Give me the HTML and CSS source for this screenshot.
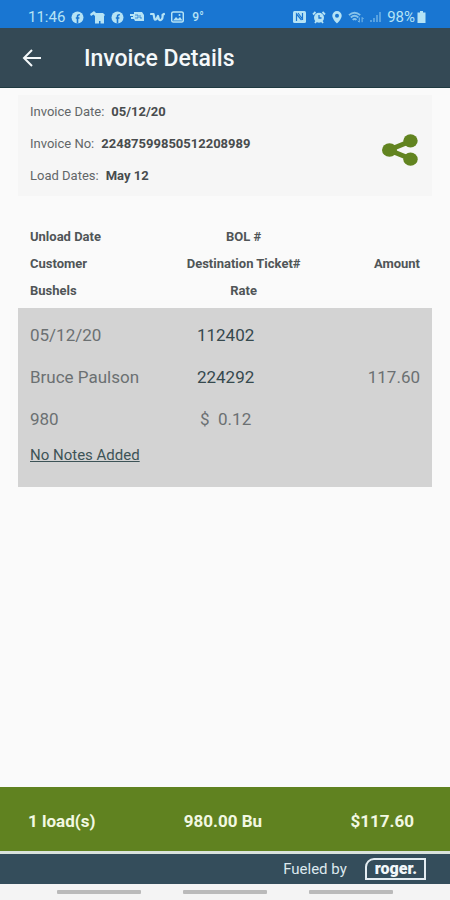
FILE: index.html
```html
<!DOCTYPE html>
<html lang="en">
<head>
<meta charset="UTF-8"/>
<meta name="viewport" content="width=device-width,initial-scale=1.0"/>
<title>Invoice Details</title>
<link rel="stylesheet" href="styles.css">
</head>
<body>

<!-- status bar -->
<div class="status">
  <div class="status-group">
    <span class="clock">11:46</span>
    <svg width="13" height="13" viewBox="0 0 13 13"><circle cx="6.5" cy="6.5" r="6" fill="currentColor"/><path d="M6.5 12.5V5.5q0-2 2.3-1.8M4.8 7h3.6" fill="none" stroke="#1976d2" stroke-width="1.6"/></svg>
    <svg width="15" height="13" viewBox="0 0 15 13"><path d="M0 3 4 0l2 2h7l2 2-1 1v7.500h-3.500V10H9v2.500H5V5L3.500 3.500 1 5z" fill="currentColor"/></svg>
    <svg width="13" height="13" viewBox="0 0 13 13"><circle cx="6.5" cy="6.5" r="6" fill="currentColor"/><path d="M6.5 12.5V5.5q0-2 2.3-1.8M4.8 7h3.6" fill="none" stroke="#1976d2" stroke-width="1.6"/></svg>
    <svg width="14" height="12" viewBox="0 0 14 12"><path d="M4 1h8l2 3v6H5l-1-2H1V6h2V5H0V3h4z" fill="currentColor"/><path d="M5 4h3v3H5M10 4v3h2" fill="none" stroke="#1976d2" stroke-width=".8"/></svg>
    <svg width="15" height="12" viewBox="0 0 15 12"><path d="M1 3h2.5l1 5q.5 1.500 2 0L8 5l1 3.500q1 1.500 2.500 0 1.500-1.500 1-4.500L14 3" fill="none" stroke="currentColor" stroke-width="2.200" stroke-linecap="round" stroke-linejoin="round"/></svg>
    <svg width="13" height="12" viewBox="0 0 13 12"><rect x=".7" y="1" width="11.600" height="10" rx="1.500" fill="none" stroke="currentColor" stroke-width="1.500"/><path d="M2 9.500 5 6l2 2 2-2 2.500 3.500z" fill="currentColor"/><circle cx="8.500" cy="4" r="1" fill="currentColor"/></svg>
    <span class="temp">9&deg;</span>
  </div>
  <div class="status-group">
    <svg width="13" height="12" viewBox="0 0 13 12"><rect width="13" height="12" rx="1.500" fill="currentColor"/><path d="M3.500 10V3l5 6M9.500 2v7M5 2l4.500 6" fill="none" stroke="#1976d2" stroke-width="1.200"/></svg>
    <svg width="14" height="13" viewBox="0 0 14 13"><path d="M1 3.500 3.500 1M13 3.500 10.500 1M3 12l1.500-2M11 12 9.500 10" stroke="currentColor" stroke-width="1.800"/><circle cx="7" cy="6.800" r="5" fill="currentColor"/><path d="M7 4v3h2.500" fill="none" stroke="#1976d2" stroke-width="1.300"/></svg>
    <svg width="10" height="13" viewBox="0 0 10 13"><path d="M5 0a4.700 4.700 0 0 1 4.700 4.700C9.700 8 5 12.500 5 12.500S.3 8 .3 4.700A4.700 4.700 0 0 1 5 0z" fill="currentColor"/><circle cx="5" cy="4.700" r="2" fill="#1976d2"/></svg>
    <svg class="dim" width="16" height="13" viewBox="0 0 17 13"><path d="M1 4q6-5 12 0M3 6.500q4-3.500 8 0M5 9q2-2 4 0" fill="none" stroke="currentColor" stroke-width="2"/><path d="M12 6.500v5M10.500 10l1.500 1.500M15 11.500v-5M16.500 8 15 6.500" fill="none" stroke="currentColor"/></svg>
    <svg class="faint" width="11" height="12" viewBox="0 0 11 12"><path d="M0 11h2V9H0zM3 11h2V7H3zM6 11h2V4H6zM9 11h2V1H9z" fill="currentColor"/></svg>
    <span class="battery">98%<svg width="9" height="12" viewBox="0 0 9 12"><path d="M3 0h3v1.500h2.500V12H.5V1.500H3z" fill="currentColor"/></svg></span>
  </div>
</div>

<header class="app-bar">
  <button class="back" aria-label="Back">
    <svg width="20" height="18" viewBox="0 0 20 18"><path d="M19 9H2M10 1 2 9l8 8" fill="none" stroke="currentColor" stroke-width="2"/></svg>
  </button>
  <h1>Invoice Details</h1>
</header>

<main>
  <section class="summary">
    <dl>
      <div><dt>Invoice Date:</dt><dd>05/12/20</dd></div>
      <div><dt>Invoice No:</dt><dd>22487599850512208989</dd></div>
      <div><dt>Load Dates:</dt><dd>May 12</dd></div>
    </dl>
    <button class="share" aria-label="Share">
      <svg width="36" height="32" viewBox="0 0 36 32"><path d="M29 7 7 16l22 9" fill="none" stroke="currentColor" stroke-width="5"/><ellipse cx="7.500" cy="16" rx="7.500" ry="6.800" fill="currentColor"/><ellipse cx="28.500" cy="6.800" rx="7.200" ry="6.600" fill="currentColor"/><ellipse cx="28.500" cy="25.200" rx="7.200" ry="6.600" fill="currentColor"/></svg>
    </button>
  </section>

  <table class="loads">
    <thead>
      <tr><th>Unload Date</th><th>BOL #</th><th></th></tr>
      <tr><th>Customer</th><th>Destination Ticket#</th><th>Amount</th></tr>
      <tr><th>Bushels</th><th>Rate</th><th></th></tr>
    </thead>
    <tbody>
      <tr><td>05/12/20</td><td class="strong">112402</td><td></td></tr>
      <tr><td>Bruce Paulson</td><td class="strong">224292</td><td>117.60</td></tr>
      <tr><td>980</td><td>$&nbsp; 0.12</td><td></td></tr>
      <tr class="notes"><td colspan="3"><a href="#">No Notes Added</a></td></tr>
    </tbody>
  </table>
</main>

<!-- totals -->
<div class="totals">
  <span>1 load(s)</span>
  <span>980.00 Bu</span>
  <span>$117.60</span>
</div>

<footer class="brand">
  <span>Fueled by</span>
  <span class="logo">roger.</span>
</footer>

<div class="nav-bar"><i></i><i></i><i></i></div>

</body>
</html>
```
FILE: styles.css
```css
*{margin:0;padding:0;box-sizing:border-box}
body{
  min-height:100vh;display:flex;flex-direction:column;
  background:#fafafa;color:#4c5254;font-family:Roboto,"Liberation Sans",sans-serif
}
button{border:none;background:none;color:inherit;cursor:pointer}
svg{display:block}

/* ---------- status bar ---------- */
.status{
  height:28px;padding:6px 24px 0 28px;display:flex;justify-content:space-between;
  align-items:center;background:#1976d2;color:#b5e3f5;font-size:15px
}
.status-group{display:flex;align-items:center;gap:6px}
.temp{font-size:12px;font-weight:500;margin-left:2px}
.dim{opacity:.7}
.faint{opacity:.4}
.battery{display:flex;align-items:center;gap:2px}

/* ---------- app bar ---------- */
.app-bar{
  height:60px;padding:0 22px;display:flex;align-items:center;gap:42px;
  background:#344955;color:#f4f8fa;border-bottom:1px solid #1f3a41
}
.app-bar h1{font-size:23px;font-weight:500;line-height:28px;padding-top:2px}

/* ---------- summary ---------- */
main{flex:1;padding:7px 18px 0}
.summary{
  display:flex;justify-content:space-between;align-items:center;
  padding:0 14px 5px 12px;background:#f6f6f6
}
.summary dl div{display:flex;align-items:center;gap:7px;height:32px;font-size:13px}
.summary dt{color:#626668}
.summary dd{font-weight:700;color:#484c4e}
.share{color:#628420;padding-top:13px}

/* ---------- loads table ---------- */
.loads{width:100%;margin-top:27px;border-spacing:0;table-layout:fixed}
.loads th{height:27px;font-size:13px;font-weight:700;color:#505557}
.loads th:first-child,.loads td:first-child{width:35%;padding-left:12px;text-align:left}
.loads th:nth-child(2),.loads td:nth-child(2){width:39%;text-align:center}
.loads th:last-child{padding-right:12px;text-align:right}
.loads thead tr:last-child th{height:31px;padding-bottom:4px}
.loads tbody{background:#d3d3d3;font-size:17px;color:#6b7072}
.loads td{height:42px}
.loads tbody tr:first-child td{height:48px;padding-top:6px}
.loads td:nth-child(2){padding-right:36px}
.loads td:nth-child(3){padding-right:12px;text-align:right}
.loads td.strong{color:#36494e}
.loads .notes td{height:47px;padding-top:4px;vertical-align:top}
.notes a{font-size:15px;color:#3d5357}

/* ---------- bottom bars ---------- */
.totals{
  height:64px;padding:4px 36px 0 28px;display:flex;justify-content:space-between;align-items:center;
  background:#608220;color:#f2f8e2;font-size:17px;font-weight:700
}
.brand{
  height:33px;padding:0 24px;display:flex;justify-content:flex-end;align-items:center;gap:18px;
  border-top:3px solid #d9e2dc;background:#344d5b;color:#dde8ee;font-size:15px
}
.logo{
  padding:0 7px 0 8px;border:2px solid #e4edf2;border-radius:9px 0 0 0;
  font-size:16px;line-height:18px;font-weight:900;color:#f2f7fa
}
.nav-bar{height:16px;padding:6px 57px 0;display:flex;justify-content:space-between;background:#f4f4f4}
.nav-bar i{width:25%;height:4px;border-radius:1px;background:#bababa}
```
